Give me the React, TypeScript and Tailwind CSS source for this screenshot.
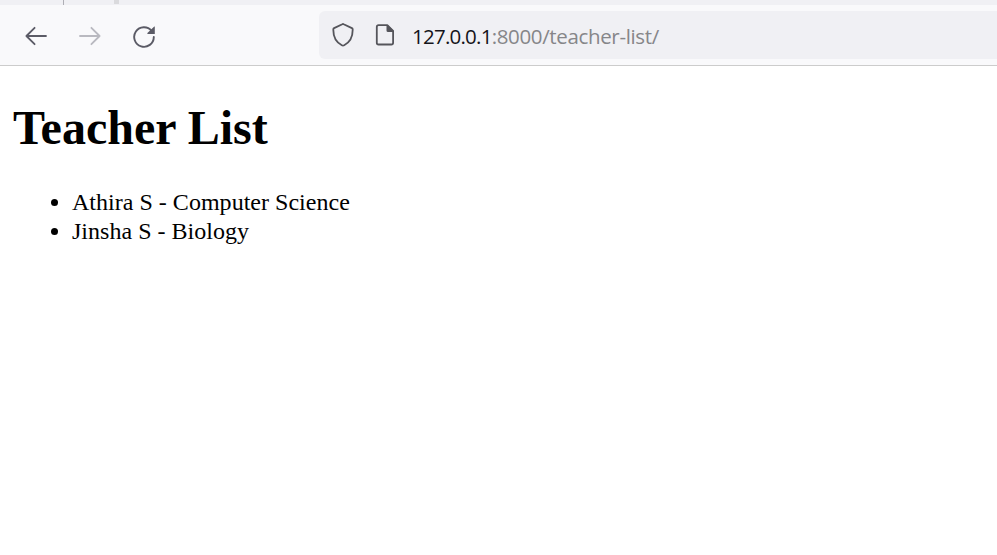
import React from "react";

function BackIcon() {
  return (
    <svg className="block h-6 w-6" viewBox="0 0 24 24" fill="none" stroke="#5b5b66" strokeWidth="1.8" strokeLinecap="round" strokeLinejoin="round">
      <path d="M22 12H2.4M10.600 3.800 2.400 12l8.200 8.200" />
    </svg>
  );
}

function ForwardIcon() {
  return (
    <svg className="block h-6 w-6" viewBox="0 0 24 24" fill="none" stroke="#b9b9c0" strokeWidth="1.8" strokeLinecap="round" strokeLinejoin="round">
      <path d="M2 12h19.600M13.400 3.800 21.600 12l-8.200 8.200" />
    </svg>
  );
}

function ReloadIcon() {
  return (
    <svg className="block h-6 w-6" viewBox="0 0 24 24" fill="none">
      <path d="M19.6 6.8A9.8 9.8 0 1 0 21.8 13" stroke="#5b5b66" strokeWidth="1.9" strokeLinecap="round" />
      <path d="M22.8 3v7h-7c-.5 0-.7-.5-.4-.9L22 2.700c.3-.3.8-.1.8.3Z" fill="#5b5b66" />
    </svg>
  );
}

function ShieldIcon() {
  return (
    <svg className="block h-6 w-6" viewBox="0 0 24 24" fill="none" stroke="#55555b" strokeWidth="1.8" strokeLinejoin="round">
      <path d="M11.300 1.200Q12 .8 12.700 1.200L20.900 5.100Q21.700 5.500 21.700 6.400C21.800 13.100 19.200 19.200 13.200 22.300Q12 23 10.800 22.300C4.800 19.200 2.200 13.100 2.300 6.400Q2.300 5.500 3.100 5.100Z" />
    </svg>
  );
}

function PageIcon() {
  return (
    <svg className="block h-6 w-6" viewBox="0 0 24 24" fill="none">
      <path d="M5.600 2.200H14.300L20.100 8V19.700a1.800 1.800 0 0 1-1.800 1.800H5.600a1.800 1.800 0 0 1-1.800-1.800V4a1.800 1.800 0 0 1 1.800-1.800Z" stroke="#55555b" strokeWidth="1.8" strokeLinejoin="round" />
      <path d="M13.500 1.900h1.200l5.800 5.800v1.200h-5.500a1.500 1.500 0 0 1-1.500-1.500Z" fill="#55555b" />
    </svg>
  );
}

export default function App() {
  return (
    <div className="flex h-[555px] w-full flex-col overflow-hidden bg-white">
      <div className="flex h-[5px] shrink-0 bg-[#f0f0f4]">
        <div className="ml-[63px] h-full w-px bg-[#aeaeb5]" />
        <div className="ml-[50px] h-[4px] w-[5px] bg-[#dadadd]" />
      </div>
      <header className="flex h-[61px] shrink-0 items-start border-b border-[#cccccc] bg-[#f9f9fb] pt-[6px]">
        <nav className="flex h-12 w-[319px] shrink-0 items-center gap-[30px] pl-6 pt-[2px]">
          <button aria-label="Back"><BackIcon /></button>
          <button aria-label="Forward"><ForwardIcon /></button>
          <button aria-label="Reload"><ReloadIcon /></button>
        </nav>
        <div className="flex h-12 flex-1 items-center rounded-l-[6px] bg-[#f0f0f4] pl-3">
          <ShieldIcon />
          <div className="ml-[18px]"><PageIcon /></div>
          <div className="ml-[15px] whitespace-nowrap pt-[2px] font-['Open_Sans',sans-serif] text-[20.5px] leading-6 text-[#868689]">
            <span className="tracking-[-0.76px] text-[#15141a]">127.0.0.1</span>
            <span className="tracking-[-0.35px]">:8000/teacher-list/</span>
          </div>
        </div>
      </header>
      <main className="px-3 font-['Liberation_Serif',serif] text-black">
        <h1 className="ml-px mt-[34px] text-[48px] font-bold leading-[55px]">Teacher List</h1>
        <ul className="mt-[33px] list-disc pl-[60px] text-[24px] leading-[29px] tracking-[0.02px]">
          <li>Athira S - Computer Science</li>
          <li>Jinsha S - Biology</li>
        </ul>
      </main>
    </div>
  );
}
